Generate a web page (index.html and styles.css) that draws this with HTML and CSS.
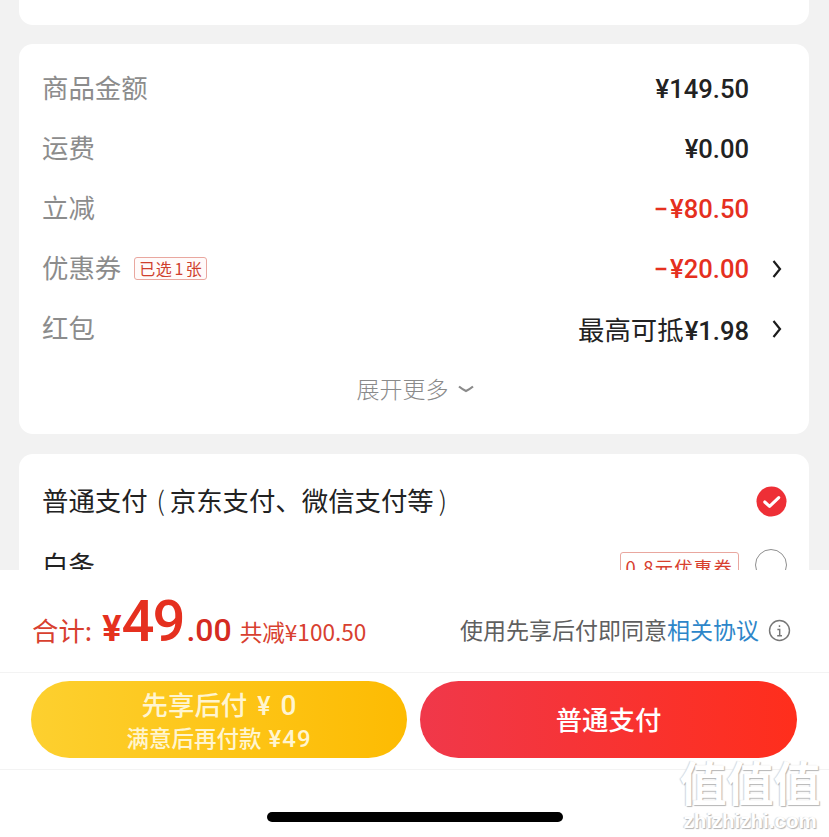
FILE: index.html
```html
<!DOCTYPE html>
<html lang="zh-CN">
<head>
<meta charset="utf-8">
<title>订单结算</title>
<link rel="stylesheet" href="styles.css">
</head>
<body>
<main class="page">
  <section class="card card-top"></section>
  <section class="card card-price">
    <div class="row"><span class="label">商品金额</span><span class="value">¥149.50</span></div>
    <div class="row"><span class="label">运费</span><span class="value">¥0.00</span></div>
    <div class="row"><span class="label">立减</span><span class="value red"><span class="minus">−</span>¥80.50</span></div>
    <div class="row">
      <span class="label">优惠券</span><span class="tag">已选<span class="tag-num">1</span>张</span>
      <span class="value red"><span class="minus">−</span>¥20.00</span>
      <svg class="chev" viewBox="0 0 10 18"><path d="M1.5 1 L8 9 L1.5 17" /></svg>
    </div>
    <div class="row">
      <span class="label">红包</span>
      <span class="value"><span class="cjk">最高可抵</span>¥1.98</span>
      <svg class="chev" viewBox="0 0 10 18"><path d="M1.5 1 L8 9 L1.5 17" /></svg>
    </div>
    <div class="more"><span class="more-text">展开更多</span><svg class="down" viewBox="0 0 16 8"><path d="M1 1.5 Q4 4 8 6 Q12 4 15 1.5" /></svg></div>
  </section>
  <section class="card card-pay">
    <div class="pay-row first">
      <span class="pay-name">普通支付 <span class="po">(</span>京东支付、微信支付等<span class="pc">)</span></span>
      <svg class="check" viewBox="0 0 32 32"><circle cx="16" cy="16" r="15.5" fill="#ee2f36"/><path d="M9 16.5 L14 21 L23.5 12" fill="none" stroke="#fff" stroke-width="3.2" stroke-linecap="round" stroke-linejoin="round"/></svg>
    </div>
    <div class="pay-row">
      <span class="pay-name">白条</span>
      <span class="coupon">0.8元优惠券</span>
      <span class="radio"></span>
    </div>
  </section>
</main>

<footer class="sheet">
  <div class="total">
    <span class="sum-label">合计:</span>
    <span class="yen">¥</span><span class="big">49</span><span class="cents">.00</span>
    <span class="saved">共减¥100.50</span>
    <span class="agree">使用先享后付即同意<a class="link">相关协议</a></span>
    <svg class="info" viewBox="0 0 24 24"><circle cx="12" cy="12" r="10.4"/><path d="M12 6.6v1.8M9.8 11h2.4v6.4M9.6 17.4h5"/></svg>
  </div>
  <div class="actions">
    <button class="btn btn-yellow"><span class="line1">先享后付<span class="l1-yen">¥</span><span class="l1-zero">0</span></span><span class="line2">满意后再付款<span class="l2-num">¥49</span></span></button>
    <button class="btn btn-red">普通支付</button>
  </div>
  <div class="home"><span class="indicator"></span></div>
</footer>

<div class="watermark"><span class="wm-cn">值值值</span><span class="wm-en">zhizhizhi.com</span></div>
</body>
</html>
```

FILE: styles.css
```css
* { box-sizing: border-box; }
html, body { margin: 0; padding: 0; }
body {
  width: 829px;
  height: 837px;
  overflow: hidden;
  position: relative;
  background: #f2f2f2;
  font-family: "Noto Sans CJK SC", "Noto Sans", sans-serif;
}
.page {
  padding: 0 20px 0 19px;
  display: flex;
  flex-direction: column;
}
.card {
  background: #fff;
  border-radius: 14px;
}
.card-top { height: 25px; border-radius: 0 0 14px 14px; }
.card-price { margin-top: 19px; padding: 15px 27px 15px 23px; }
.card-pay { margin-top: 20px; height: 200px; padding: 15px 22px 0 23px; }
.row {
  height: 60px;
  display: flex;
  align-items: center;
}
.label {
  font-size: 26.4px;
  color: #8c8c8c;
  font-weight: 400;
  line-height: 1;
  padding-bottom: 3px;
}
.tag {
  margin-left: 13px;
  margin-bottom: 2px;
  height: 23px;
  padding: 0 4px;
  font-size: 16px;
  line-height: 20px;
  letter-spacing: 0.6px;
  color: #cf3f2e;
  border: 1px solid #e9a79f;
  border-radius: 3px;
  background: #fffafa;
}
.tag-num { margin: 0 2px; }
.value {
  margin-left: auto;
  margin-right: 33px;
  padding-top: 2px;
  font-family: "Roboto", "Noto Sans CJK SC", sans-serif;
  font-size: 25.6px;
  font-weight: 500;
  color: #222;
  line-height: 1;
}
.row:nth-child(n+4) .value { margin-right: 23px; }
.value.red { color: #e5301f; }
.minus { margin-right: 2px; margin-left: 1px; }
.cjk { font-family: "Noto Sans CJK SC", sans-serif; font-size: 26.4px; font-weight: 400; margin-right: 1px; }
.chev {
  width: 10px;
  height: 18px;
  fill: none;
  stroke: #1c1c1c;
  stroke-width: 2.2;
}
.more {
  height: 60px;
  display: flex;
  justify-content: center;
  align-items: center;
  gap: 9px;
  font-size: 23px;
  font-weight: 300;
  color: #8a8a8a;
  padding-left: 6px;
}
.more-text { padding-bottom: 3px; }
.down {
  width: 16px;
  height: 8px;
  margin-bottom: 1px;
  fill: none;
  stroke: #8a8a8a;
  stroke-width: 2.2;
}
.pay-row {
  height: 64px;
  display: flex;
  align-items: center;
}
.pay-name { font-size: 26.4px; color: #222; font-weight: 400; line-height: 1; padding-bottom: 2px; }
.po { margin: 0 5px 0 3px; font-weight: 300; }
.pc { margin-left: 5px; font-weight: 300; }
.check { width: 31px; height: 31px; margin-left: auto; }
.coupon {
  margin-left: auto;
  margin-top: 8px;
  height: 34px;
  padding: 0 5px;
  font-size: 18.4px;
  letter-spacing: 1.2px;
  color: #d8402f;
  border: 1px solid #e9a79f;
  border-radius: 3px;
  line-height: 28px;
}
.radio {
  margin-left: 16px;
  width: 32px;
  height: 32px;
  border: 1px solid #8f8f8f;
  border-radius: 50%;
  margin-top: -1px;
}
.sheet {
  position: absolute;
  left: 0;
  right: 0;
  top: 570px;
  height: 267px;
  background: #fff;
}
.total {
  height: 103px;
  padding: 22px 38px 0 32px;
  display: flex;
  align-items: baseline;
  color: #e5301f;
  border-bottom: 1px solid #f3f3f3;
  line-height: 1;
}
.sum-label { font-size: 26.4px; font-weight: 400; color: #d8402f; margin-right: 10px; }
.yen { font-family: "Roboto", sans-serif; font-size: 36px; font-weight: 700; }
.big { font-family: "Roboto", sans-serif; font-size: 58px; font-weight: 500; letter-spacing: -2px; }
.cents { font-family: "Roboto", sans-serif; font-size: 32px; font-weight: 500; color: #d52b22; margin-left: 3px; }
.saved { margin-left: 8px; font-size: 22.6px; font-weight: 400; color: #d8402f; }
.agree {
  margin-left: auto;
  align-self: flex-start;
  margin-top: 26px;
  font-size: 23px;
  font-weight: 400;
  color: #5f5f5f;
}
.link { color: #2d86c9; }
.info {
  width: 23px;
  height: 23px;
  margin-left: 9px;
  align-self: flex-start;
  margin-top: 27px;
  fill: none;
  stroke: #777;
  stroke-width: 1.5;
}
.actions {
  height: 97px;
  padding: 8px 32px 0 31px;
  display: flex;
  gap: 13px;
  border-bottom: 1px solid #f3f3f3;
}
.btn {
  border: 0;
  margin: 0;
  padding: 0 0 3px;
  height: 77px;
  border-radius: 39px;
  color: #fff;
  font-family: inherit;
  display: flex;
  flex-direction: column;
  align-items: center;
  justify-content: center;
}
.btn-yellow {
  flex: 0 0 376px;
  padding: 0;
  background: linear-gradient(90deg, #fdd02f, #fdbb02);
}
.btn-red {
  flex: 1;
  background: linear-gradient(90deg, #f0384a, #ff2e1c);
  font-size: 26.4px;
  font-weight: 500;
}
.line1 { font-size: 26.4px; line-height: 34px; color: #fff5d0; font-weight: 500; }
.line2 { font-size: 22.5px; line-height: 27px; color: #fff5d0; font-weight: 500; }
.l1-yen { margin: 0 9px 0 10px; font-family: "Roboto", sans-serif; font-size: 25px; }
.l1-zero { font-family: "Roboto", sans-serif; font-size: 28px; margin-left: 1px; }
.l2-num { font-family: "Roboto", sans-serif; font-size: 24px; letter-spacing: 1px; margin-left: 7px; }
.home {
  display: flex;
  justify-content: center;
  padding: 42px 0 0 0;
}
.indicator {
  width: 296px;
  height: 10px;
  border-radius: 5px;
  background: #000;
}
.watermark {
  position: absolute;
  left: 676px;
  top: 752px;
  width: 148px;
  display: flex;
  flex-direction: column;
  align-items: center;
  color: #fff;
  text-shadow: 1px 1px 1px #b5b5b5, -1px 0 1px #d5d5d5;
}
.wm-cn { font-size: 47px; line-height: 58px; font-weight: 700; }
.wm-en { font-family: "Liberation Sans", sans-serif; font-size: 20.5px; line-height: 22px; font-weight: 700; }
```
